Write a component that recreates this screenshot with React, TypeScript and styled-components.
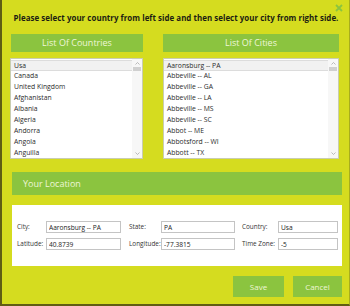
import React from "react";
import styled, { createGlobalStyle } from "styled-components";

const GlobalStyle = createGlobalStyle`
  html, body {
    margin: 0;
    padding: 0;
    background: #d5dc1f;
  }
  * {
    box-sizing: border-box;
  }
`;

const Frame = styled.div`
  position: relative;
  width: 350px;
  height: 306px;
  background: #d5dc1f;
  border-left: 2px solid #5f5d14;
  border-bottom: 2px solid #5f5d14;
  border-right: 1px solid #a8ad1c;
  padding: 0 7px 0 8px;
  display: flex;
  flex-direction: column;
  font-family: "Open Sans", "Noto Sans", sans-serif;
  overflow: hidden;
`;

const CloseButton = styled.div`
  position: absolute;
  top: 4px;
  right: 6px;
  width: 8px;
  height: 8px;
  display: flex;
`;

const Heading = styled.div`
  margin-top: 12px;
  height: 13px;
  line-height: 13px;
  font-size: 7.9px;
  font-weight: 700;
  color: #1c1c12;
  text-align: center;
  white-space: nowrap;
  letter-spacing: 0.05px;
`;

const Columns = styled.div`
  margin-top: 9px;
  display: grid;
  grid-template-columns: 133px 176px;
  column-gap: 20px;
`;

const Column = styled.div`
  display: flex;
  flex-direction: column;
  gap: 6px;
`;

const GreenHeader = styled.div<{ $inset?: number }>`
  height: 18px;
  margin-left: ${p => p.$inset || 0}px;
  background: #8bc43f;
  color: #eef6d8;
  font-size: 9px;
  line-height: 18px;
  text-align: center;
`;

const ListBox = styled.div`
  height: 101px;
  background: #fff;
  border: 1px solid #c9cdb0;
  display: flex;
`;

const Items = styled.div`
  flex: 1;
  padding-top: 1px;
  display: flex;
  flex-direction: column;
  overflow: hidden;
`;

const Item = styled.div<{ $selected?: boolean }>`
  height: 11px;
  flex: none;
  line-height: 10px;
  font-size: 6.8px;
  color: #2b2b2b;
  padding-left: 3px;
  white-space: nowrap;
  background: ${p => (p.$selected ? "#f1f1f1" : "transparent")};
  border-top: 1px solid ${p => (p.$selected ? "#dcdcdc" : "transparent")};
  border-bottom: 1px solid ${p => (p.$selected ? "#dcdcdc" : "transparent")};
  margin-bottom: ${p => (p.$selected ? "-1px" : "0")};
`;

const ScrollTrack = styled.div`
  width: 10px;
  background: #f7f7f7;
  display: flex;
  flex-direction: column;
  align-items: center;
  padding: 3px 0 3px;
`;

const ScrollThumb = styled.div`
  width: 8px;
  height: 4px;
  margin-top: 2px;
  background: #d0d0d0;
`;

const Spacer = styled.div`
  flex: 1;
`;

const LocationBar = styled.div`
  margin-top: 13px;
  margin-left: 2px;
  height: 23px;
  background: #8bc43f;
  color: #eef6d8;
  font-size: 9px;
  line-height: 23px;
  padding-left: 11px;
`;

const Panel = styled.div`
  margin-top: 10px;
  margin-left: 2px;
  height: 61px;
  background: #fff;
  padding: 16px 4px 0 5px;
  display: grid;
  grid-template-columns: 29px 83px 32px 81px 36px 60px;
  grid-auto-rows: 12px;
  row-gap: 5px;
`;

const FieldLabel = styled.div`
  font-size: 6.4px;
  line-height: 12px;
  color: #333;
  white-space: nowrap;
`;

const FieldInput = styled.input<{ $w: number }>`
  width: ${p => p.$w}px;
  height: 12px;
  margin: 0;
  padding: 0 0 0 2px;
  border: 1px solid #c4c4c4;
  background: #fff;
  font-family: "Open Sans", "Noto Sans", sans-serif;
  font-size: 6.6px;
  color: #222;
  outline: none;
`;

const ButtonRow = styled.div`
  margin-top: 10px;
  display: flex;
  justify-content: flex-end;
  gap: 9px;
`;

const GreenButton = styled.div<{ $w: number }>`
  width: ${p => p.$w}px;
  height: 21px;
  background: #8bc43f;
  color: #eef6d8;
  font-size: 8px;
  line-height: 21px;
  text-align: center;
`;

const countries = [
  "Usa",
  "Canada",
  "United Kingdom",
  "Afghanistan",
  "Albania",
  "Algeria",
  "Andorra",
  "Angola",
  "Anguilla",
];

const cities = [
  "Aaronsburg -- PA",
  "Abbeville -- AL",
  "Abbeville -- GA",
  "Abbeville -- LA",
  "Abbeville -- MS",
  "Abbeville -- SC",
  "Abbot -- ME",
  "Abbotsford -- WI",
  "Abbott -- TX",
];

function Chevron({ up }: { up?: boolean }) {
  return (
    <svg width="5" height="3" viewBox="0 0 5 3">
      <path
        d={up ? "M0.5 2.5 L2.5 0.5 L4.5 2.5" : "M0.5 0.5 L2.5 2.5 L4.5 0.5"}
        fill="none"
        stroke="#a9a9a9"
        strokeWidth="0.8"
      />
    </svg>
  );
}

function List({ items }: { items: string[] }) {
  return (
    <ListBox>
      <Items>
        {items.map((it, i) => (
          <Item key={it} $selected={i === 0}>
            {it}
          </Item>
        ))}
      </Items>
      <ScrollTrack>
        <Chevron up />
        <ScrollThumb />
        <Spacer />
        <Chevron />
      </ScrollTrack>
    </ListBox>
  );
}

export default function App() {
  return (
    <>
      <GlobalStyle />
      <Frame>
        <CloseButton>
          <svg width="8" height="8" viewBox="0 0 8 8">
            <path d="M1 1 L7 7 M7 1 L1 7" stroke="#8bc43f" strokeWidth="1.8" />
          </svg>
        </CloseButton>

        <Heading>
          Please select your country from left side and then select your city from right side.
        </Heading>

        <Columns>
          <Column>
            <GreenHeader $inset={1}>List Of Countries</GreenHeader>
            <List items={countries} />
          </Column>
          <Column>
            <GreenHeader>List Of Cities</GreenHeader>
            <List items={cities} />
          </Column>
        </Columns>

        <LocationBar>Your Location</LocationBar>

        <Panel>
          <FieldLabel>City:</FieldLabel>
          <FieldInput $w={75} readOnly value="Aaronsburg -- PA" />
          <FieldLabel>State:</FieldLabel>
          <FieldInput $w={74} readOnly value="PA" />
          <FieldLabel>Country:</FieldLabel>
          <FieldInput $w={60} readOnly value="Usa" />

          <FieldLabel>Latitude:</FieldLabel>
          <FieldInput $w={75} readOnly value="40.8739" />
          <FieldLabel>Longitude:</FieldLabel>
          <FieldInput $w={74} readOnly value="-77.3815" />
          <FieldLabel>Time Zone:</FieldLabel>
          <FieldInput $w={60} readOnly value="-5" />
        </Panel>

        <ButtonRow>
          <GreenButton $w={51}>Save</GreenButton>
          <GreenButton $w={49}>Cancel</GreenButton>
        </ButtonRow>
      </Frame>
    </>
  );
}
